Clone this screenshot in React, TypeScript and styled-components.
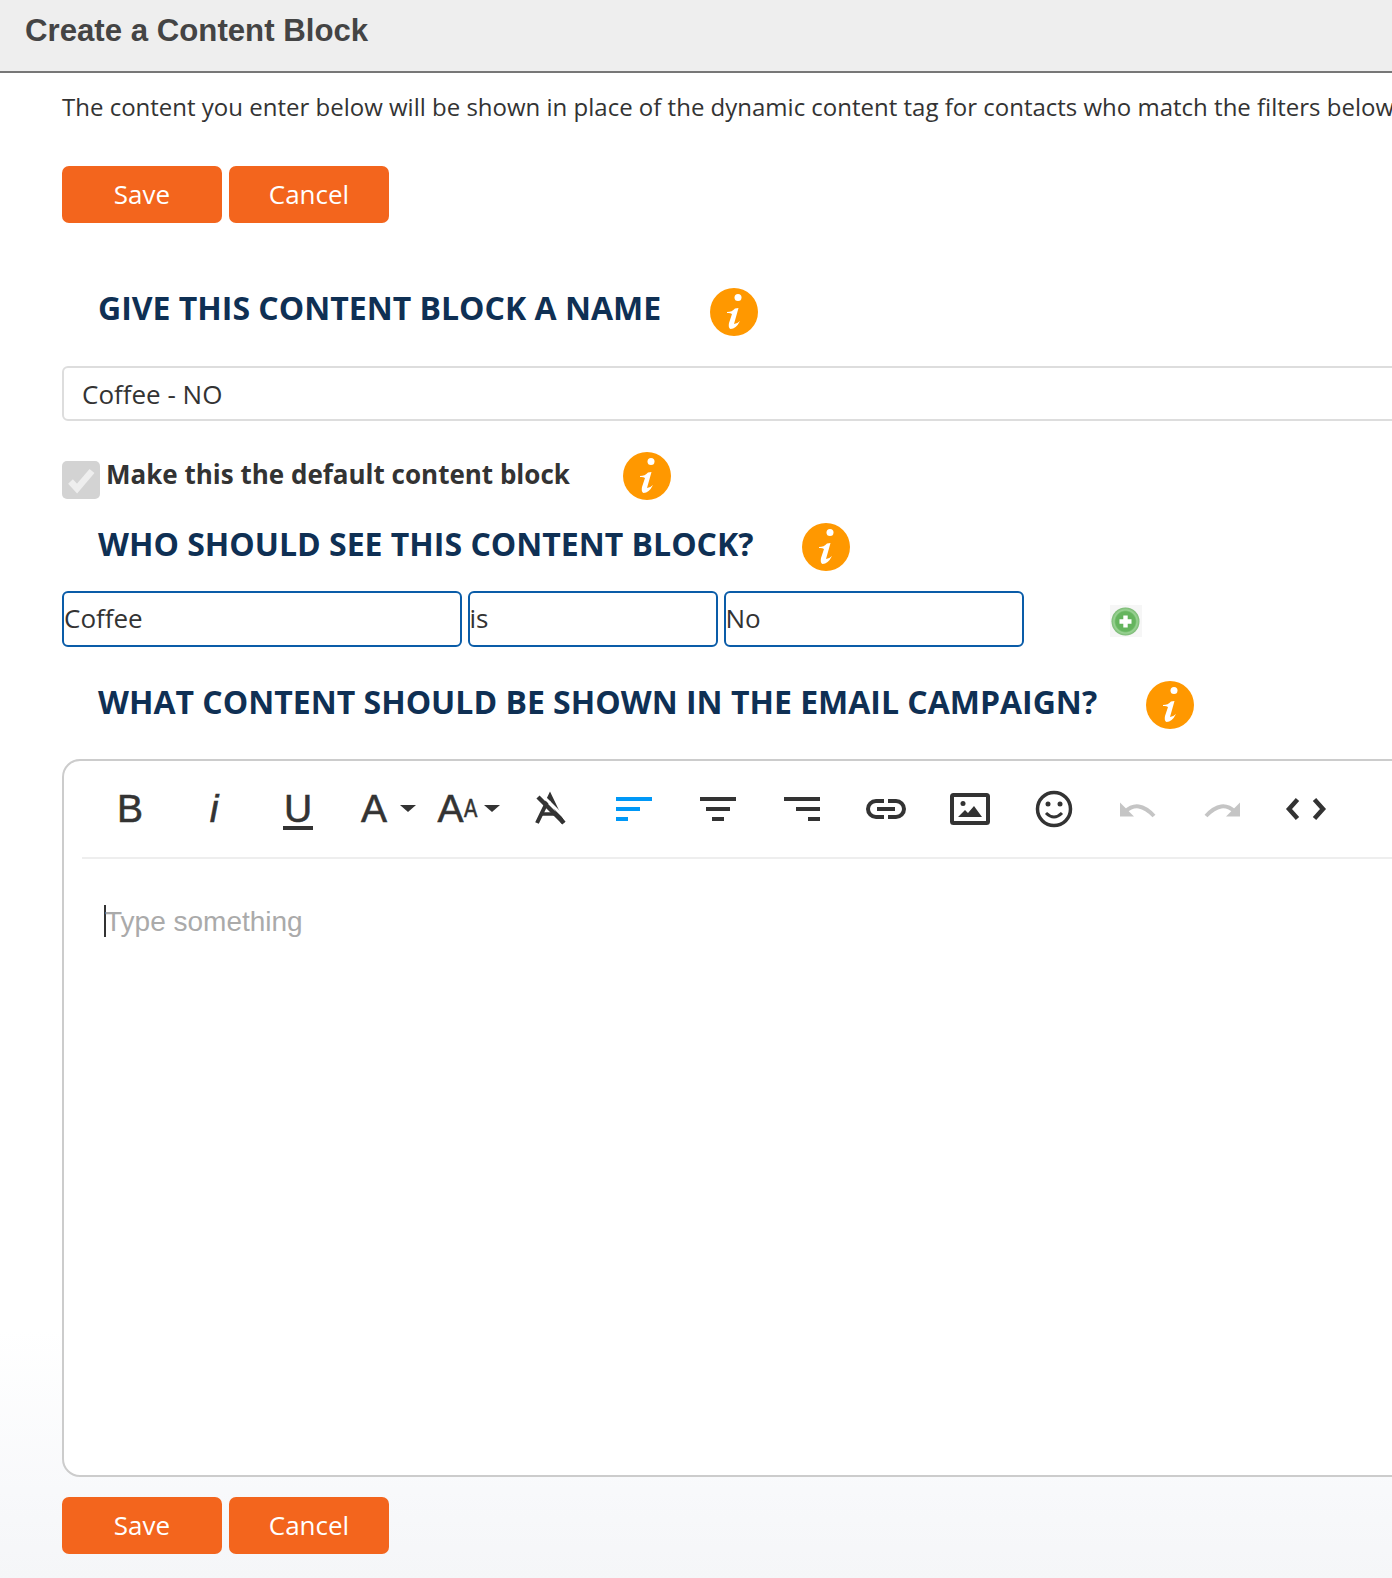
import { createGlobalStyle, styled } from "styled-components";

const GlobalStyle = createGlobalStyle`
  html, body {
    margin: 0;
    padding: 0;
  }
  body {
    width: 1392px;
    height: 1578px;
    overflow: hidden;
    font-family: "Open Sans", sans-serif;
    color: #333;
    background: linear-gradient(to bottom, #fff 0, #fff 1330px, #f8f9fb 1490px, #f5f6f8 100%);
  }
`;

const Page = styled.div`
  width: 1392px;
  height: 1578px;
  overflow: hidden;
`;

const Header = styled.header`
  height: 71px;
  padding-left: 25px;
  display: flex;
  align-items: center;
  background: #eee;
  border-bottom: 2px solid #777;
`;

const Title = styled.h1`
  margin: 0 0 9px;
  font-family: "Liberation Sans", Arial, sans-serif;
  font-size: 31.2px;
  font-weight: 700;
  color: #444;
`;

const Main = styled.main`
  padding: 17px 0 0 62px;
`;

const Intro = styled.p`
  margin: 0;
  font-size: 24px;
  line-height: 34px;
  white-space: nowrap;
  color: #333;
`;

const Actions = styled.div<{ $top: number }>`
  display: flex;
  gap: 7px;
  margin-top: ${(p) => p.$top}px;
`;

const ActionButton = styled.button`
  width: 160px;
  height: 57px;
  padding: 0 0 2px;
  border: 0;
  border-radius: 7px;
  background: #f3651d;
  color: #fff;
  font-family: "Open Sans", sans-serif;
  font-size: 26px;
`;

const SectionRow = styled.div<{ $top: number; $gap: number }>`
  display: flex;
  align-items: center;
  gap: ${(p) => p.$gap}px;
  height: 48px;
  margin-top: ${(p) => p.$top}px;
  padding-left: 36px;
`;

const SectionTitle = styled.h2<{ $lift?: number }>`
  margin: ${(p) => p.$lift ?? -8}px 0 0;
  font-size: 32px;
  font-weight: 700;
  color: #0f3054;
  white-space: nowrap;
  text-transform: uppercase;
`;

const NameInput = styled.input`
  display: block;
  box-sizing: border-box;
  width: 1400px;
  height: 55px;
  margin-top: 30px;
  padding: 0 18px;
  border: 2px solid #ddd;
  border-radius: 6px;
  background: #fff;
  font-family: "Open Sans", sans-serif;
  font-size: 26px;
  color: #333;
  outline: none;
`;

const DefaultRow = styled.div`
  display: flex;
  align-items: center;
  height: 48px;
  margin-top: 31px;
`;

const CheckBox = styled.span`
  display: flex;
  flex: none;
  width: 38px;
  height: 38px;
  margin: 8px 6px 0 0;
  border-radius: 5px;
  background: #d3d3d3;
`;

const DefaultLabel = styled.label`
  margin: -4px 53px 0 0;
  font-size: 26px;
  font-weight: 700;
  color: #333;
  white-space: nowrap;
`;

const FilterRow = styled.div`
  display: flex;
  align-items: center;
  gap: 6px;
  margin-top: 20px;
`;

const FilterField = styled.div<{ $width: number }>`
  box-sizing: border-box;
  width: ${(p) => p.$width}px;
  height: 56px;
  padding-left: 0;
  border: 2px solid #0a5ca8;
  border-radius: 6px;
  background: #fff;
  font-size: 26px;
  line-height: 50px;
  color: #333;
`;

const AddButton = styled.span`
  display: flex;
  align-items: center;
  justify-content: center;
  width: 32px;
  height: 32px;
  margin: 4px 0 0 80px;
  background: #f6f6f6;
`;

const Editor = styled.section`
  box-sizing: border-box;
  width: 1400px;
  height: 718px;
  margin-top: 30px;
  border: 2px solid #ccc;
  border-radius: 18px;
  background: #fff;
`;

const Toolbar = styled.div`
  display: flex;
  align-items: flex-start;
  height: 96px;
  margin-left: 18px;
  padding-left: 6px;
  border-bottom: 2px solid #eee;
`;

const ToolButton = styled.button`
  position: relative;
  display: flex;
  align-items: center;
  justify-content: center;
  flex: none;
  width: 84px;
  height: 95px;
  padding: 0;
  border: 0;
  background: none;
  color: #333;
  font-family: "Liberation Sans", Arial, sans-serif;
  font-size: 39px;
  line-height: 1;
  -webkit-text-stroke: 0.6px #333;
`;

const DropButton = styled(ToolButton)`
  padding-right: 16px;
  box-sizing: border-box;
`;

const Caret = styled.span`
  position: absolute;
  left: 60px;
  top: calc(50% - 4px);
  border-left: 8px solid transparent;
  border-right: 8px solid transparent;
  border-top: 7px solid #333;
`;

const ItalicMark = styled.i`
  font-style: italic;
`;

const UnderMark = styled.span`
  position: relative;
  &::after {
    content: "";
    position: absolute;
    left: -1px;
    right: -1px;
    bottom: -2px;
    height: 4px;
    background: #333;
  }
`;

const SmallMark = styled.span`
  display: inline-block;
  width: 15px;
  font-size: 25px;
  transform: scaleX(0.8);
  transform-origin: left center;
`;

const EditArea = styled.div`
  display: flex;
  align-items: center;
  height: 32px;
  margin: 46px 0 0 40px;
  padding-top: 0;
  font-family: "Liberation Sans", Arial, sans-serif;
  font-size: 28px;
  color: #aaa;
  border-left: 2px solid #333;
`;

const PlaceholderText = styled.span`
  margin: 2px 0 0 -1px;
`;

const InfoIcon = () => (
  <svg width="48" height="48" viewBox="0 0 48 48">
    <circle cx="24" cy="24" r="24" fill="#ff9800" />
    <circle cx="28" cy="9.500" r="3.500" fill="#fff" />
    <path d="M17 24 Q22 24 25 20.500 L28.500 20 L24 36 Q27 36 30 33 Q26 41 20.500 41 Q18 40 19 35 L22 26 Q20 24.500 17 25 Z" fill="#fff" />
  </svg>
);

const AddIcon = () => (
  <svg width="29" height="29" viewBox="0 0 29 29">
    <defs>
      <radialGradient id="addFill" cx="50%" cy="50%" r="50%">
        <stop offset="0%" stopColor="#60b259" />
        <stop offset="70%" stopColor="#66b55f" />
        <stop offset="82%" stopColor="#9ad394" />
        <stop offset="100%" stopColor="#79b873" />
      </radialGradient>
    </defs>
    <circle cx="14.500" cy="14.500" r="14" fill="url(#addFill)" />
    <path d="M12.300 8.500h4.400v3.800h3.800v4.400h-3.800v3.800h-4.400v-3.800h-3.800v-4.400h3.800z" fill="#fff" />
  </svg>
);

const CheckMark = () => (
  <svg width="38" height="38" viewBox="0 0 38 38">
    <path d="M8.500 20.500 L15 27.500 L30 10" fill="none" stroke="#eee" strokeWidth="6.500" />
  </svg>
);

const ClearIcon = () => (
  <svg width="48" height="48" viewBox="0 0 48 48" fill="none">
    <path d="M11 38 L24 11 L37 38" stroke="#333" strokeWidth="4" />
    <path d="M16 29 H31" stroke="#333" strokeWidth="3.500" />
    <path d="M15 9 L41 35" stroke="#fff" strokeWidth="3" />
    <path d="M12 12 L38 38" stroke="#333" strokeWidth="4.500" />
  </svg>
);

const AlignIcon = ({ mode, color }: { mode: "left" | "center" | "right"; color: string }) => {
  const place = (w: number) => (mode === "left" ? 6 : mode === "center" ? 24 - w / 2 : 42 - w);
  return (
    <svg width="48" height="48" viewBox="0 0 48 48" fill={color}>
      <rect x={place(36)} y="12" width="36" height="4" />
      <rect x={place(24)} y="22" width="24" height="4" />
      <rect x={place(12)} y="32" width="12" height="4" />
    </svg>
  );
};

const LinkIcon = () => (
  <svg width="48" height="48" viewBox="0 0 48 48" fill="#333">
    <path d="M22 14 H14 a10 10 0 0 0 0 20 H22 V30 H14 a6 6 0 0 1 0-12 H22 Z" />
    <path d="M26 14 H34 a10 10 0 0 1 0 20 H26 V30 H34 a6 6 0 0 0 0-12 H26 Z" />
    <rect x="15" y="22" width="18" height="4" />
  </svg>
);

const ImageIcon = () => (
  <svg width="48" height="48" viewBox="0 0 48 48">
    <rect x="6" y="10" width="36" height="28" rx="1.500" fill="none" stroke="#333" strokeWidth="4" />
    <circle cx="17" cy="18.500" r="2.500" fill="#333" />
    <path d="M12 32 L19 25 L22 28 L28 21 L36 32 Z" fill="#333" />
  </svg>
);

const SmileIcon = () => (
  <svg width="48" height="48" viewBox="0 0 48 48">
    <circle cx="24" cy="24" r="16.500" fill="none" stroke="#333" strokeWidth="3.500" />
    <circle cx="18" cy="19" r="2.500" fill="#333" />
    <circle cx="30" cy="19" r="2.500" fill="#333" />
    <path d="M16 28 Q24 36 32 28" fill="none" stroke="#333" strokeWidth="3" />
  </svg>
);

const HistoryIcon = ({ flip }: { flip?: boolean }) => (
  <svg width="48" height="48" viewBox="0 0 48 48" transform={flip ? "scale(-1 1)" : undefined}>
    <path d="M6 17.500 V31.500 H20 Z" fill="#c5c5c5" />
    <path d="M11 27 Q24 14 40 31" fill="none" stroke="#c5c5c5" strokeWidth="4" />
  </svg>
);

const CodeIcon = () => (
  <svg width="48" height="48" viewBox="0 0 48 48" fill="none" stroke="#333" strokeWidth="4.500">
    <path d="M15.500 14.500 L7 24 L15.500 33.500" />
    <path d="M32.500 14.500 L41 24 L32.500 33.500" />
  </svg>
);

const ButtonPair = ({ top }: { top: number }) => (
  <Actions $top={top}>
    <ActionButton>Save</ActionButton>
    <ActionButton>Cancel</ActionButton>
  </Actions>
);

export default function App() {
  return (
    <Page>
      <GlobalStyle />
      <Header>
        <Title>Create a Content Block</Title>
      </Header>
      <Main>
        <Intro>
          The content you enter below will be shown in place of the dynamic content tag for contacts who match the
          filters below
        </Intro>
        <ButtonPair top={42} />

        <SectionRow $top={65} $gap={49}>
          <SectionTitle $lift={-10}>Give this content block a name</SectionTitle>
          <InfoIcon />
        </SectionRow>
        <NameInput defaultValue="Coffee - NO" />

        <DefaultRow>
          <CheckBox>
            <CheckMark />
          </CheckBox>
          <DefaultLabel>Make this the default content block</DefaultLabel>
          <InfoIcon />
        </DefaultRow>

        <SectionRow $top={23} $gap={48}>
          <SectionTitle>Who should see this content block?</SectionTitle>
          <InfoIcon />
        </SectionRow>
        <FilterRow>
          <FilterField $width={399.5}>Coffee</FilterField>
          <FilterField $width={250}>is</FilterField>
          <FilterField $width={300}>No</FilterField>
          <AddButton>
            <AddIcon />
          </AddButton>
        </FilterRow>

        <SectionRow $top={34} $gap={49}>
          <SectionTitle>What content should be shown in the email campaign?</SectionTitle>
          <InfoIcon />
        </SectionRow>

        <Editor>
          <Toolbar>
            <ToolButton>B</ToolButton>
            <ToolButton>
              <ItalicMark>i</ItalicMark>
            </ToolButton>
            <ToolButton>
              <UnderMark>U</UnderMark>
            </ToolButton>
            <DropButton>
              A<Caret />
            </DropButton>
            <DropButton>
              A<SmallMark>A</SmallMark>
              <Caret />
            </DropButton>
            <ToolButton>
              <ClearIcon />
            </ToolButton>
            <ToolButton>
              <AlignIcon mode="left" color="#0098f7" />
            </ToolButton>
            <ToolButton>
              <AlignIcon mode="center" color="#333" />
            </ToolButton>
            <ToolButton>
              <AlignIcon mode="right" color="#333" />
            </ToolButton>
            <ToolButton>
              <LinkIcon />
            </ToolButton>
            <ToolButton>
              <ImageIcon />
            </ToolButton>
            <ToolButton>
              <SmileIcon />
            </ToolButton>
            <ToolButton>
              <HistoryIcon />
            </ToolButton>
            <ToolButton>
              <HistoryIcon flip />
            </ToolButton>
            <ToolButton>
              <CodeIcon />
            </ToolButton>
          </Toolbar>
          <EditArea>
            <PlaceholderText>Type something</PlaceholderText>
          </EditArea>
        </Editor>
        <ButtonPair top={20} />
      </Main>
    </Page>
  );
}
